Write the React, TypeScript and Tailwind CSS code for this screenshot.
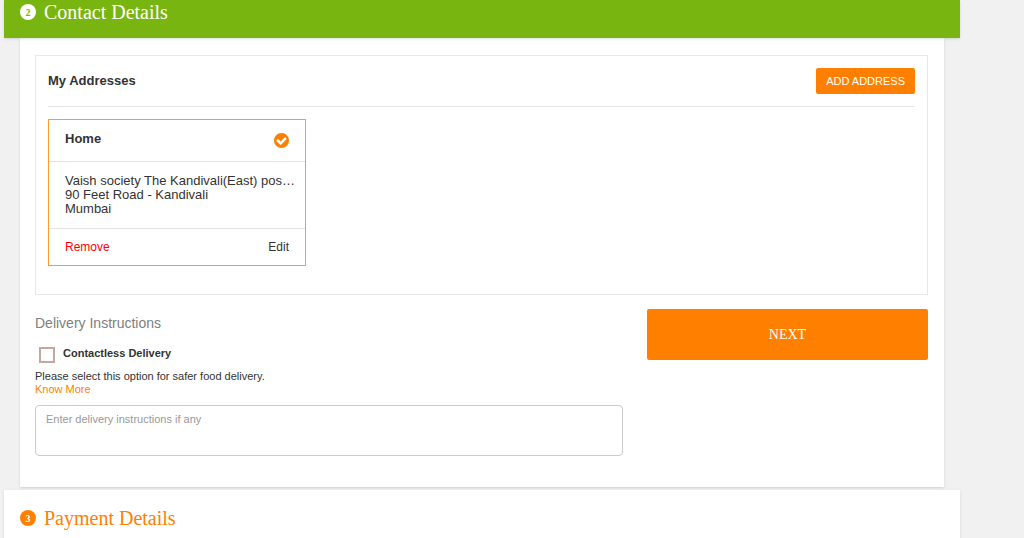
import { useState } from "react";

const addresses = [
  {
    id: 1,
    label: "Home",
    lines: [
      "Vaish society The Kandivali(East) pos…",
      "90 Feet Road - Kandivali",
      "Mumbai",
    ],
  },
];

const CheckIcon = () => (
  <svg
    viewBox="128 128 1536 1536"
    fill="currentColor"
    className="size-[15px] text-[#ff8000]"
    aria-hidden="true"
  >
    <path d="M1412 734q0-28-18-46l-91-90q-19-19-45-19t-45 19l-408 407-226-226q-19-19-45-19t-45 19l-91 90q-18 18-18 46 0 27 18 45l362 362q19 19 45 19 27 0 46-19l543-543q18-18 18-45zm252 162q0 209-103 385.5t-279.5 279.5-385.5 103-385.5-103-279.5-279.5-103-385.5 103-385.5 279.5-279.5 385.5-103 385.5 103 279.5 279.5 103 385.5z" />
  </svg>
);

const AddressCard = ({
  label,
  lines,
  selected,
  onSelect,
}: {
  label: string;
  lines: string[];
  selected: boolean;
  onSelect: () => void;
}) => {
  return (
    <div
      onClick={onSelect}
      className={`w-full max-w-[258px] border bg-white text-[13px] ${
        selected ? "border-[#ff9a33]" : "border-[#e4e4e4]"
      }`}
    >
      <div className="flex h-[42px] items-center justify-between border-b border-[#e4e4e4] px-4">
        <h4 className="pb-1 font-bold">{label}</h4>
        {selected && <CheckIcon />}
      </div>
      <div className="border-b border-[#e4e4e4] py-3 pr-1 pl-4 leading-[14px]">
        {lines.map((line) => (
          <p key={line}>{line}</p>
        ))}
      </div>
      <div className="flex h-9 items-center justify-between px-4 text-[12px]">
        <button type="button" className="text-[#ff0000]">
          Remove
        </button>
        <button type="button">Edit</button>
      </div>
    </div>
  );
};

const App = () => {
  const [selectedId, setSelectedId] = useState(1);
  const [contactless, setContactless] = useState(false);
  const [instructions, setInstructions] = useState("");

  return (
    <div className="min-h-screen overflow-hidden bg-[#f1f1f1] pr-16 pl-1 font-['Liberation_Sans',Arial,sans-serif] text-[#333333]">
      <header className="relative flex h-[38px] items-start gap-2 bg-[#79b510] px-4 font-['Liberation_Serif',serif] text-white shadow-sm">
        <span className="mt-1 flex size-4 items-center justify-center rounded-full bg-white text-[10px] font-bold text-[#79b510]">
          2
        </span>
        <h2 className="text-[20px] leading-6">Contact Details</h2>
      </header>

      <main className="mx-4 bg-white pt-[17px] pr-4 pb-[31px] pl-[15px] shadow-sm">
        <section className="border border-[#e8e8e8] px-3 pt-3 pb-7">
          <div className="mb-3 flex items-start justify-between border-b border-[#e4e4e4] pb-3">
            <h3 className="text-[13px] leading-[26px] font-bold">
              My Addresses
            </h3>
            <button
              type="button"
              className="h-[26px] rounded-[2px] bg-[#ff8000] px-[10px] text-[11px] text-white"
            >
              ADD ADDRESS
            </button>
          </div>
          {addresses.map((address) => (
            <AddressCard
              key={address.id}
              label={address.label}
              lines={address.lines}
              selected={address.id === selectedId}
              onSelect={() => setSelectedId(address.id)}
            />
          ))}
        </section>

        <section className="flex items-start gap-6 pt-[14px]">
          <div className="min-w-0 flex-1 text-[11px]">
            <h3 className="mt-1 text-[14px] leading-5 text-[#808080]">
              Delivery Instructions
            </h3>
            <label className="mt-3 flex items-start gap-2 pl-1 leading-4 font-bold">
              <input
                type="checkbox"
                checked={contactless}
                onChange={(e) => setContactless(e.target.checked)}
                className="mt-[2px] size-4 appearance-none border-2 border-[#c4a79e] bg-white checked:bg-[#ff8000]"
              />
              Contactless Delivery
            </label>
            <p className="mt-[7px] leading-3">
              Please select this option for safer food delivery.
            </p>
            <a
              href="#know-more"
              className="mt-px block leading-3 text-[#ff8000]"
            >
              Know More
            </a>
            <textarea
              aria-label="Delivery instructions"
              placeholder="Enter delivery instructions if any"
              value={instructions}
              onChange={(e) => setInstructions(e.target.value)}
              className="mt-[10px] block h-[51px] w-full resize-none rounded-[4px] border border-[#cccccc] px-[10px] py-[6px] leading-[14px] placeholder:text-[#999999]"
            />
          </div>
          <button
            type="button"
            className="h-[51px] w-[281px] rounded-[2px] bg-[#ff8000] font-['Liberation_Serif',serif] text-[14px] text-white"
          >
            NEXT
          </button>
        </section>
      </main>

      <section className="mt-[3px] flex h-14 items-center gap-2 bg-white px-4 font-['Liberation_Serif',serif] text-[#ff8000] shadow-sm">
        <span className="flex size-4 items-center justify-center rounded-full bg-[#ff8000] text-[10px] font-bold text-white">
          3
        </span>
        <h2 className="text-[20px] leading-6">Payment Details</h2>
      </section>
    </div>
  );
};

export default App;
